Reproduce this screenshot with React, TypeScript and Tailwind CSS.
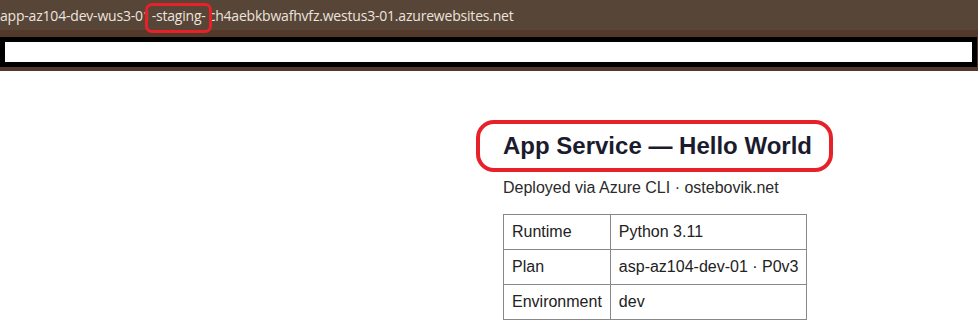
export default function App() {
  return (
    <div className="min-h-[331px] bg-white overflow-hidden" style={{ fontFamily: '"Liberation Sans", Arial, sans-serif' }}>
      {/* address bar */}
      <div className="h-[30px] bg-[#574538] flex items-center whitespace-nowrap text-[14px] leading-[21px] text-[#ece4de] tracking-[-0.2px]" style={{ fontFamily: '"Open Sans", sans-serif' }}>
        <span>app-az104-dev-wus3-01</span>
        <span className="relative z-10 inline-block px-[1px]">
          -staging-
          <span className="absolute -left-[6px] -right-[5px] -top-[2px] -bottom-[7px] border-[3px] border-[#e8202a] rounded-[7px]" />
        </span>
        <span className="pl-[2px]">ch4aebkbwafhvfz.westus3-01.azurewebsites.net</span>
      </div>
      <div className="bg-[#54392a] pt-[7px] pb-[4px] pr-[1px]">
        <div className="h-[30px] border-[5px] border-black bg-white" />
      </div>

      {/* page content */}
      <div className="pl-[503px] pt-[61px]">
        <div className="relative inline-block">
          <h1 className="text-[24px] leading-[28px] font-bold text-[#1b1b2e]">App Service — Hello World</h1>
          <span className="absolute -left-[27px] -right-[21px] -top-[12px] -bottom-[12px] border-4 border-[#e8202a] rounded-[18px]" />
        </div>
        <p className="mt-[18px] text-[16px] leading-[18px] text-[#2a2a2a]">Deployed via Azure CLI · ostebovik.net</p>
        <table className="mt-[17px] border-collapse text-[16px] leading-[18px] text-[#222]">
          <tbody>
            <tr>
              <td className="border border-[#888] p-2">Runtime</td>
              <td className="border border-[#888] p-2">Python 3.11</td>
            </tr>
            <tr>
              <td className="border border-[#888] p-2">Plan</td>
              <td className="border border-[#888] p-2">asp-az104-dev-01 · P0v3</td>
            </tr>
            <tr>
              <td className="border border-[#888] p-2">Environment</td>
              <td className="border border-[#888] p-2">dev</td>
            </tr>
          </tbody>
        </table>
      </div>
    </div>
  );
}
